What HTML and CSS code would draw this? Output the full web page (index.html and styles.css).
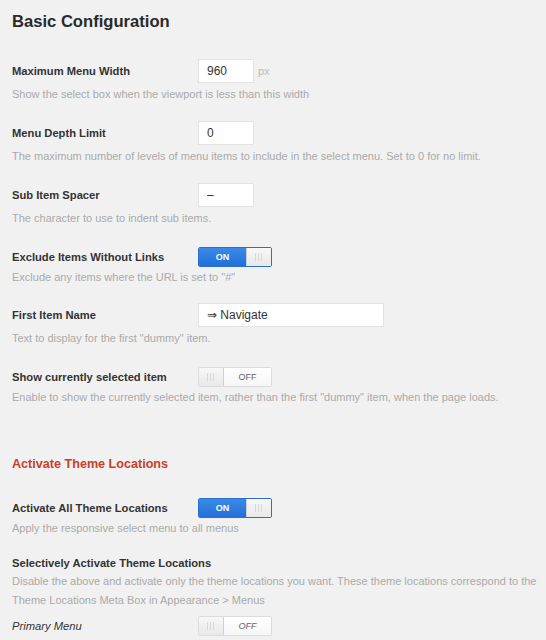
FILE: index.html
```html
<!DOCTYPE html>
<html lang="en">
<head>
    <meta charset="UTF-8">
    <title>Basic Configuration</title>
    <link rel="stylesheet" href="styles.css">
</head>
<body>
    <h1>Basic Configuration</h1>

    <div class="field">
        <div class="row">
            <label class="label">Maximum Menu Width</label>
            <input class="text small" type="text" value="960">
            <span class="unit">px</span>
        </div>
        <p class="desc">Show the select box when the viewport is less than this width</p>
    </div>

    <div class="field">
        <div class="row">
            <label class="label">Menu Depth Limit</label>
            <input class="text small" type="text" value="0">
        </div>
        <p class="desc">The maximum number of levels of menu items to include in the select menu. Set to 0 for no limit.</p>
    </div>

    <div class="field">
        <div class="row">
            <label class="label">Sub Item Spacer</label>
            <input class="text small" type="text" value="&ndash;">
        </div>
        <p class="desc">The character to use to indent sub items.</p>
    </div>

    <div class="field switch">
        <div class="row">
            <label class="label">Exclude Items Without Links</label>
            <div class="toggle on"><span class="state">ON</span><span class="knob"></span></div>
        </div>
        <p class="desc">Exclude any items where the URL is set to "#"</p>
    </div>

    <div class="field">
        <div class="row">
            <label class="label">First Item Name</label>
            <input class="text wide" type="text" value="&rArr; Navigate">
        </div>
        <p class="desc">Text to display for the first "dummy" item.</p>
    </div>

    <div class="field switch">
        <div class="row">
            <label class="label">Show currently selected item</label>
            <div class="toggle off"><span class="knob"></span><span class="state">OFF</span></div>
        </div>
        <p class="desc">Enable to show the currently selected item, rather than the first "dummy" item, when the page loads.</p>
    </div>

    <h2>Activate Theme Locations</h2>

    <div class="field switch">
        <div class="row">
            <label class="label">Activate All Theme Locations</label>
            <div class="toggle on"><span class="state">ON</span><span class="knob"></span></div>
        </div>
        <p class="desc">Apply the responsive select menu to all menus</p>
    </div>

    <div class="field locations">
        <div class="row plain">
            <label class="label">Selectively Activate Theme Locations</label>
        </div>
        <p class="desc">Disable the above and activate only the theme locations you want. These theme locations correspond to the Theme Locations Meta Box in Appearance &gt; Menus</p>
        <div class="row sub">
            <label class="label">Primary Menu</label>
            <div class="toggle off"><span class="knob"></span><span class="state">OFF</span></div>
        </div>
    </div>
</body>
</html>
```

FILE: styles.css
```css
body {
    font-family: "Liberation Sans", Arial, sans-serif;
    background: #f1f1f1;
    color: #333;
    margin: 0;
    padding: 12px 2px 0 12px;
}
h1 { font-size: 16.6px; margin: 0 0 27px; line-height: 20px; color: #2a2a2a; }
h2 { font-size: 12.6px; color: #c9402a; margin: 49px 0 23px; line-height: 18px; }

.field { margin-bottom: 18px; }
.row { display: flex; align-items: center; min-height: 24px; }
.label { width: 186px; font-size: 11.2px; font-weight: bold; line-height: 18px; }
.desc { margin: 2px 0 0; font-size: 11px; line-height: 18px; color: #aaa; }

.switch { margin-bottom: 17px; }
.switch .desc { margin-top: -1px; }

.text {
    height: 24px;
    box-sizing: border-box;
    border: 1px solid #e3e3e3;
    background: #fff;
    padding: 0 8px;
    font: 12px "Liberation Sans", Arial, sans-serif;
    color: #333;
    margin: 0;
}
.small { width: 56px; }
.wide { width: 186px; }
.unit { margin-left: 4px; font-size: 11px; color: #bbb; }

.toggle {
    display: flex;
    width: 74px;
    height: 20px;
    box-sizing: border-box;
    border: 1px solid #dcdcdc;
    border-radius: 2px;
    overflow: hidden;
    font-size: 9px;
}
.toggle .state { width: 47px; display: flex; align-items: center; justify-content: center; }
.toggle .knob {
    flex: 1;
    background: linear-gradient(#f7f7f7, #e9e9e9);
    position: relative;
}
.toggle .knob::after {
    content: "";
    position: absolute;
    left: 50%;
    top: 5px;
    width: 7px;
    height: 8px;
    margin-left: -4px;
    background: repeating-linear-gradient(90deg, #d6d6d6 0 1px, transparent 1px 3px);
}
.on { border-color: #2a6fcf; }
.on .state { background: linear-gradient(#3a8ae8, #2270d8); color: #fff; font-weight: bold; }
.on .knob { border-left: 1px solid #d0d0d0; }
.off .state { background: linear-gradient(#fff, #f6f6f6); color: #666; }
.off .knob { border-right: 1px solid #d0d0d0; }

.plain { min-height: 18px; margin-top: 7px; }
.plain .label { width: auto; }
.locations .desc { margin-top: 0; line-height: 19px; }
.sub { margin-top: 4px; }
.sub .label { font-weight: normal; font-style: italic; }
.sub .toggle { font-style: italic; }
```
